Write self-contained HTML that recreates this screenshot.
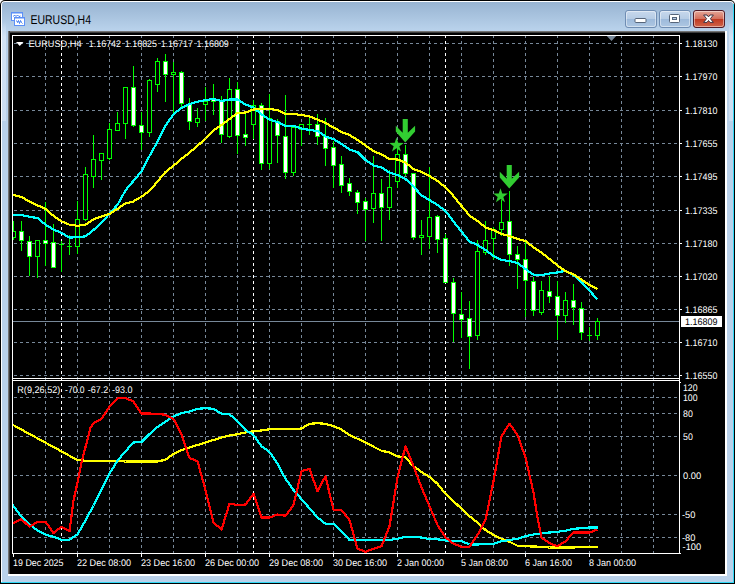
<!DOCTYPE html>
<html><head><meta charset="utf-8"><title>EURUSD,H4</title>
<style>html,body{margin:0;padding:0;background:#fff;overflow:hidden}svg{display:block}text{font-family:"Liberation Sans","DejaVu Sans",sans-serif}</style>
</head><body>
<svg width="737" height="584" viewBox="0 0 737 584" text-rendering="geometricPrecision">
<defs>
<linearGradient id="tb" x1="0" y1="0" x2="0" y2="1"><stop offset="0" stop-color="#98b4d2"/><stop offset="1" stop-color="#bad3ec"/></linearGradient>
<linearGradient id="bt" x1="0" y1="0" x2="0" y2="1"><stop offset="0" stop-color="#c8d9ed"/><stop offset="0.48" stop-color="#b6cce5"/><stop offset="0.52" stop-color="#9dbadb"/><stop offset="1" stop-color="#afc8e3"/></linearGradient>
<linearGradient id="cl" x1="0" y1="0" x2="0" y2="1"><stop offset="0" stop-color="#e5aa9c"/><stop offset="0.48" stop-color="#d4705c"/><stop offset="0.52" stop-color="#c03a22"/><stop offset="1" stop-color="#d0674c"/></linearGradient>
<linearGradient id="eg" x1="0" y1="0" x2="0" y2="1"><stop offset="0" stop-color="#8f8f8f"/><stop offset="1" stop-color="#202020"/></linearGradient>
<linearGradient id="egl" x1="0" y1="0" x2="1" y2="0"><stop offset="0" stop-color="#8f8f8f"/><stop offset="1" stop-color="#202020"/></linearGradient>
<clipPath id="cm"><rect x="13" y="36" width="666" height="342"/></clipPath>
<clipPath id="ci"><rect x="13" y="381" width="666" height="172"/></clipPath>
</defs>
<rect x="0" y="0" width="735" height="584" rx="5" ry="5" fill="#000"/>
<rect x="0" y="300" width="735" height="284" fill="#000"/>
<rect x="1" y="1" width="733" height="582" rx="4" ry="4" fill="#fff"/>
<rect x="1" y="300" width="733" height="282" fill="#31d8f6"/>
<rect x="2" y="2" width="731" height="580" rx="3" ry="3" fill="#b9d1ea"/>
<rect x="1" y="40" width="1" height="542" fill="#fff"/>
<rect x="2" y="300" width="731" height="282" fill="#b9d1ea"/>
<rect x="733" y="4" width="1" height="579" fill="#31d8f6"/>
<rect x="1" y="582" width="733" height="1" fill="#31d8f6"/>
<path d="M2 31 V5 Q2 2 5 2 H730 Q733 2 733 5 V31 Z" fill="url(#tb)"/>
<linearGradient id="sh" x1="0" y1="0" x2="0" y2="1"><stop offset="0" stop-color="#d3e3f4" stop-opacity="0"/><stop offset="0.15" stop-color="#d3e3f4" stop-opacity="1"/><stop offset="1" stop-color="#cbddf1" stop-opacity="1"/></linearGradient>
<rect x="2" y="22" width="4" height="99" fill="url(#sh)"/>
<rect x="729" y="22" width="4" height="99" fill="url(#sh)"/>
<rect x="8" y="31" width="719" height="545" fill="#fff"/>
<rect x="8" y="31" width="717" height="2" fill="url(#eg)"/>
<rect x="8" y="31" width="2" height="543" fill="url(#egl)"/>
<rect x="10" y="33" width="715" height="541" fill="#000"/>
<g shape-rendering="crispEdges">
<rect x="11.5" y="12.5" width="11" height="8" fill="#fff" stroke="#5c90f6"/>
<rect x="12" y="13" width="10" height="1" fill="#a9c6fb"/>
<rect x="14.5" y="17.5" width="10" height="8" fill="#fff" stroke="#5c90f6"/>
<rect x="15" y="18" width="9" height="1" fill="#a9c6fb"/>
</g>
<polyline points="16.5,20.5 17.5,22.5 18.5,20.5 19.5,23.5 20.5,20.5 21.5,22.5 22.5,23.5" fill="none" stroke="#3a78f0" stroke-width="1"/>
<polyline points="13.5,16.5 14.5,15 16,16.5 17.5,15 19,16.5 20.5,16" fill="none" stroke="#3a78f0" stroke-width="1"/>
<text x="30.5" y="23.8" font-size="12.6" fill="#000" textLength="60.5" lengthAdjust="spacingAndGlyphs">EURUSD,H4</text>
<rect x="625.5" y="10.5" width="31" height="17" rx="2.5" ry="2.5" fill="url(#bt)" stroke="#6f8db3"/>
<rect x="626.5" y="11.5" width="29" height="15" rx="2" ry="2" fill="none" stroke="#fff" stroke-opacity="0.45"/>
<rect x="659.5" y="10.5" width="31" height="17" rx="2.5" ry="2.5" fill="url(#bt)" stroke="#6f8db3"/>
<rect x="660.5" y="11.5" width="29" height="15" rx="2" ry="2" fill="none" stroke="#fff" stroke-opacity="0.45"/>
<rect x="693.5" y="10.5" width="31" height="17" rx="2.5" ry="2.5" fill="url(#cl)" stroke="#4f1c28"/>
<rect x="694.5" y="11.5" width="29" height="15" rx="2" ry="2" fill="none" stroke="#fff" stroke-opacity="0.45"/>
<rect x="635" y="18.5" width="11" height="4" rx="1" fill="#fff" stroke="#56657a" stroke-width="1"/>
<rect x="669.5" y="14.5" width="10" height="8" rx="1" fill="#fff" stroke="#56657a" stroke-width="1"/>
<rect x="672.5" y="17.5" width="4" height="2" fill="#b7cde6" stroke="#56657a" stroke-width="1"/>
<path d="M703.6 15 L707 15 L708.5 16.9 L710 15 L713.4 15 L710.4 18.7 L713.4 22.4 L710 22.4 L708.5 20.5 L707 22.4 L703.6 22.4 L706.6 18.7 Z" fill="#fff" stroke="#3f3545" stroke-width="1" stroke-linejoin="round"/>
<g shape-rendering="crispEdges" fill="none" stroke-width="1">
<line x1="14" y1="43.5" x2="680" y2="43.5" stroke="#778899" stroke-dasharray="3 3"/>
<line x1="14" y1="76.5" x2="680" y2="76.5" stroke="#778899" stroke-dasharray="3 3"/>
<line x1="14" y1="110.5" x2="680" y2="110.5" stroke="#778899" stroke-dasharray="3 3"/>
<line x1="14" y1="143.5" x2="680" y2="143.5" stroke="#778899" stroke-dasharray="3 3"/>
<line x1="14" y1="176.5" x2="680" y2="176.5" stroke="#778899" stroke-dasharray="3 3"/>
<line x1="14" y1="210.5" x2="680" y2="210.5" stroke="#778899" stroke-dasharray="3 3"/>
<line x1="14" y1="243.5" x2="680" y2="243.5" stroke="#778899" stroke-dasharray="3 3"/>
<line x1="14" y1="276.5" x2="680" y2="276.5" stroke="#778899" stroke-dasharray="3 3"/>
<line x1="14" y1="309.5" x2="680" y2="309.5" stroke="#778899" stroke-dasharray="3 3"/>
<line x1="14" y1="342.5" x2="680" y2="342.5" stroke="#778899" stroke-dasharray="3 3"/>
<line x1="14" y1="375.5" x2="680" y2="375.5" stroke="#778899" stroke-dasharray="3 3"/>
<line x1="14" y1="397.5" x2="680" y2="397.5" stroke="#778899" stroke-dasharray="3 3"/>
<line x1="14" y1="413.5" x2="680" y2="413.5" stroke="#778899" stroke-dasharray="3 3"/>
<line x1="14" y1="436.5" x2="680" y2="436.5" stroke="#778899" stroke-dasharray="3 3"/>
<line x1="14" y1="475.5" x2="680" y2="475.5" stroke="#778899" stroke-dasharray="3 3"/>
<line x1="14" y1="514.5" x2="680" y2="514.5" stroke="#778899" stroke-dasharray="3 3"/>
<line x1="14" y1="537.5" x2="680" y2="537.5" stroke="#778899" stroke-dasharray="3 3"/>
<line x1="45.5" y1="35" x2="45.5" y2="553" stroke="#778899" stroke-dasharray="3 3"/>
<line x1="77.5" y1="35" x2="77.5" y2="553" stroke="#778899" stroke-dasharray="3 3"/>
<line x1="109.5" y1="35" x2="109.5" y2="553" stroke="#778899" stroke-dasharray="3 3"/>
<line x1="141.5" y1="35" x2="141.5" y2="553" stroke="#778899" stroke-dasharray="3 3"/>
<line x1="173.5" y1="35" x2="173.5" y2="553" stroke="#778899" stroke-dasharray="3 3"/>
<line x1="205.5" y1="35" x2="205.5" y2="553" stroke="#778899" stroke-dasharray="3 3"/>
<line x1="237.5" y1="35" x2="237.5" y2="553" stroke="#778899" stroke-dasharray="3 3"/>
<line x1="269.5" y1="35" x2="269.5" y2="553" stroke="#778899" stroke-dasharray="3 3"/>
<line x1="301.5" y1="35" x2="301.5" y2="553" stroke="#778899" stroke-dasharray="3 3"/>
<line x1="333.5" y1="35" x2="333.5" y2="553" stroke="#778899" stroke-dasharray="3 3"/>
<line x1="365.5" y1="35" x2="365.5" y2="553" stroke="#778899" stroke-dasharray="3 3"/>
<line x1="397.5" y1="35" x2="397.5" y2="553" stroke="#778899" stroke-dasharray="3 3"/>
<line x1="429.5" y1="35" x2="429.5" y2="553" stroke="#778899" stroke-dasharray="3 3"/>
<line x1="461.5" y1="35" x2="461.5" y2="553" stroke="#778899" stroke-dasharray="3 3"/>
<line x1="493.5" y1="35" x2="493.5" y2="553" stroke="#778899" stroke-dasharray="3 3"/>
<line x1="525.5" y1="35" x2="525.5" y2="553" stroke="#778899" stroke-dasharray="3 3"/>
<line x1="557.5" y1="35" x2="557.5" y2="553" stroke="#778899" stroke-dasharray="3 3"/>
<line x1="589.5" y1="35" x2="589.5" y2="553" stroke="#778899" stroke-dasharray="3 3"/>
<line x1="621.5" y1="35" x2="621.5" y2="553" stroke="#778899" stroke-dasharray="3 3"/>
<line x1="653.5" y1="35" x2="653.5" y2="553" stroke="#778899" stroke-dasharray="3 3"/>
<line x1="61.5" y1="35" x2="61.5" y2="553" stroke="#fff" stroke-dasharray="3 3"/>
<line x1="253.5" y1="35" x2="253.5" y2="553" stroke="#fff" stroke-dasharray="3 3"/>
<line x1="445.5" y1="35" x2="445.5" y2="553" stroke="#fff" stroke-dasharray="3 3"/>
</g>
<rect x="13" y="321" width="667" height="1" fill="#778899"/>
<g shape-rendering="crispEdges" clip-path="url(#cm)">
<rect x="13" y="221" width="1" height="19" fill="#00ff00"/>
<rect x="11" y="231" width="5" height="7" fill="#00ff00"/>
<rect x="12" y="232" width="3" height="5" fill="#000"/>
<rect x="21" y="221" width="1" height="30" fill="#00ff00"/>
<rect x="19" y="231" width="5" height="10" fill="#00ff00"/>
<rect x="20" y="232" width="3" height="8" fill="#fff"/>
<rect x="29" y="236" width="1" height="40" fill="#00ff00"/>
<rect x="27" y="241" width="5" height="16" fill="#00ff00"/>
<rect x="28" y="242" width="3" height="14" fill="#fff"/>
<rect x="37" y="240" width="1" height="38" fill="#00ff00"/>
<rect x="35" y="240" width="5" height="17" fill="#00ff00"/>
<rect x="36" y="241" width="3" height="15" fill="#000"/>
<rect x="45" y="202" width="1" height="64" fill="#00ff00"/>
<rect x="43" y="240" width="5" height="4" fill="#00ff00"/>
<rect x="44" y="241" width="3" height="2" fill="#fff"/>
<rect x="53" y="224" width="1" height="44" fill="#00ff00"/>
<rect x="51" y="242" width="5" height="26" fill="#00ff00"/>
<rect x="52" y="243" width="3" height="24" fill="#fff"/>
<rect x="61" y="241" width="1" height="31" fill="#00ff00"/>
<rect x="59" y="244" width="5" height="1" fill="#00ff00"/>
<rect x="69" y="235" width="1" height="20" fill="#00ff00"/>
<rect x="67" y="246" width="5" height="1" fill="#00ff00"/>
<rect x="77" y="201" width="1" height="53" fill="#00ff00"/>
<rect x="75" y="219" width="5" height="28" fill="#00ff00"/>
<rect x="76" y="220" width="3" height="26" fill="#000"/>
<rect x="85" y="167" width="1" height="54" fill="#00ff00"/>
<rect x="83" y="174" width="5" height="46" fill="#00ff00"/>
<rect x="84" y="175" width="3" height="44" fill="#000"/>
<rect x="93" y="135" width="1" height="53" fill="#00ff00"/>
<rect x="91" y="159" width="5" height="18" fill="#00ff00"/>
<rect x="92" y="160" width="3" height="16" fill="#000"/>
<rect x="101" y="153" width="1" height="27" fill="#00ff00"/>
<rect x="99" y="153" width="5" height="8" fill="#00ff00"/>
<rect x="100" y="154" width="3" height="6" fill="#000"/>
<rect x="109" y="123" width="1" height="37" fill="#00ff00"/>
<rect x="107" y="129" width="5" height="30" fill="#00ff00"/>
<rect x="108" y="130" width="3" height="28" fill="#000"/>
<rect x="117" y="112" width="1" height="19" fill="#00ff00"/>
<rect x="115" y="123" width="5" height="8" fill="#00ff00"/>
<rect x="116" y="124" width="3" height="6" fill="#000"/>
<rect x="125" y="87" width="1" height="52" fill="#00ff00"/>
<rect x="123" y="87" width="5" height="37" fill="#00ff00"/>
<rect x="124" y="88" width="3" height="35" fill="#000"/>
<rect x="133" y="66" width="1" height="61" fill="#00ff00"/>
<rect x="131" y="87" width="5" height="39" fill="#00ff00"/>
<rect x="132" y="88" width="3" height="37" fill="#fff"/>
<rect x="141" y="112" width="1" height="38" fill="#00ff00"/>
<rect x="139" y="125" width="5" height="8" fill="#00ff00"/>
<rect x="140" y="126" width="3" height="6" fill="#fff"/>
<rect x="149" y="79" width="1" height="58" fill="#00ff00"/>
<rect x="147" y="80" width="5" height="53" fill="#00ff00"/>
<rect x="148" y="81" width="3" height="51" fill="#000"/>
<rect x="157" y="58" width="1" height="34" fill="#00ff00"/>
<rect x="155" y="61" width="5" height="24" fill="#00ff00"/>
<rect x="156" y="62" width="3" height="22" fill="#000"/>
<rect x="165" y="54" width="1" height="48" fill="#00ff00"/>
<rect x="163" y="61" width="5" height="14" fill="#00ff00"/>
<rect x="164" y="62" width="3" height="12" fill="#fff"/>
<rect x="173" y="62" width="1" height="51" fill="#00ff00"/>
<rect x="171" y="72" width="5" height="3" fill="#00ff00"/>
<rect x="172" y="73" width="3" height="1" fill="#000"/>
<rect x="181" y="71" width="1" height="37" fill="#00ff00"/>
<rect x="179" y="72" width="5" height="32" fill="#00ff00"/>
<rect x="180" y="73" width="3" height="30" fill="#fff"/>
<rect x="189" y="98" width="1" height="32" fill="#00ff00"/>
<rect x="187" y="104" width="5" height="18" fill="#00ff00"/>
<rect x="188" y="105" width="3" height="16" fill="#fff"/>
<rect x="197" y="108" width="1" height="19" fill="#00ff00"/>
<rect x="195" y="118" width="5" height="5" fill="#00ff00"/>
<rect x="196" y="119" width="3" height="3" fill="#000"/>
<rect x="205" y="87" width="1" height="34" fill="#00ff00"/>
<rect x="203" y="101" width="5" height="4" fill="#00ff00"/>
<rect x="204" y="102" width="3" height="2" fill="#000"/>
<rect x="213" y="84" width="1" height="31" fill="#00ff00"/>
<rect x="211" y="99" width="5" height="3" fill="#00ff00"/>
<rect x="212" y="100" width="3" height="1" fill="#fff"/>
<rect x="221" y="96" width="1" height="47" fill="#00ff00"/>
<rect x="219" y="101" width="5" height="34" fill="#00ff00"/>
<rect x="220" y="102" width="3" height="32" fill="#fff"/>
<rect x="229" y="78" width="1" height="60" fill="#00ff00"/>
<rect x="227" y="89" width="5" height="48" fill="#00ff00"/>
<rect x="228" y="90" width="3" height="46" fill="#000"/>
<rect x="237" y="82" width="1" height="72" fill="#00ff00"/>
<rect x="235" y="89" width="5" height="47" fill="#00ff00"/>
<rect x="236" y="90" width="3" height="45" fill="#fff"/>
<rect x="245" y="112" width="1" height="34" fill="#00ff00"/>
<rect x="243" y="134" width="5" height="4" fill="#00ff00"/>
<rect x="244" y="135" width="3" height="2" fill="#fff"/>
<rect x="253" y="100" width="1" height="39" fill="#00ff00"/>
<rect x="251" y="105" width="5" height="20" fill="#00ff00"/>
<rect x="252" y="106" width="3" height="18" fill="#000"/>
<rect x="261" y="103" width="1" height="67" fill="#00ff00"/>
<rect x="259" y="105" width="5" height="59" fill="#00ff00"/>
<rect x="260" y="106" width="3" height="57" fill="#fff"/>
<rect x="269" y="94" width="1" height="75" fill="#00ff00"/>
<rect x="267" y="118" width="5" height="46" fill="#00ff00"/>
<rect x="268" y="119" width="3" height="44" fill="#000"/>
<rect x="277" y="119" width="1" height="44" fill="#00ff00"/>
<rect x="275" y="121" width="5" height="15" fill="#00ff00"/>
<rect x="276" y="122" width="3" height="13" fill="#fff"/>
<rect x="285" y="95" width="1" height="84" fill="#00ff00"/>
<rect x="283" y="136" width="5" height="37" fill="#00ff00"/>
<rect x="284" y="137" width="3" height="35" fill="#fff"/>
<rect x="293" y="127" width="1" height="49" fill="#00ff00"/>
<rect x="291" y="127" width="5" height="46" fill="#00ff00"/>
<rect x="292" y="128" width="3" height="44" fill="#000"/>
<rect x="301" y="124" width="1" height="22" fill="#00ff00"/>
<rect x="299" y="124" width="5" height="6" fill="#00ff00"/>
<rect x="300" y="125" width="3" height="4" fill="#000"/>
<rect x="309" y="117" width="1" height="18" fill="#00ff00"/>
<rect x="307" y="124" width="5" height="1" fill="#00ff00"/>
<rect x="317" y="114" width="1" height="31" fill="#00ff00"/>
<rect x="315" y="124" width="5" height="13" fill="#00ff00"/>
<rect x="316" y="125" width="3" height="11" fill="#fff"/>
<rect x="325" y="118" width="1" height="48" fill="#00ff00"/>
<rect x="323" y="136" width="5" height="13" fill="#00ff00"/>
<rect x="324" y="137" width="3" height="11" fill="#fff"/>
<rect x="333" y="141" width="1" height="47" fill="#00ff00"/>
<rect x="331" y="147" width="5" height="19" fill="#00ff00"/>
<rect x="332" y="148" width="3" height="17" fill="#fff"/>
<rect x="341" y="156" width="1" height="37" fill="#00ff00"/>
<rect x="339" y="164" width="5" height="22" fill="#00ff00"/>
<rect x="340" y="165" width="3" height="20" fill="#fff"/>
<rect x="349" y="178" width="1" height="18" fill="#00ff00"/>
<rect x="347" y="183" width="5" height="9" fill="#00ff00"/>
<rect x="348" y="184" width="3" height="7" fill="#fff"/>
<rect x="357" y="190" width="1" height="24" fill="#00ff00"/>
<rect x="355" y="192" width="5" height="11" fill="#00ff00"/>
<rect x="356" y="193" width="3" height="9" fill="#fff"/>
<rect x="365" y="198" width="1" height="43" fill="#00ff00"/>
<rect x="363" y="201" width="5" height="9" fill="#00ff00"/>
<rect x="364" y="202" width="3" height="7" fill="#fff"/>
<rect x="373" y="156" width="1" height="67" fill="#00ff00"/>
<rect x="371" y="193" width="5" height="16" fill="#00ff00"/>
<rect x="372" y="194" width="3" height="14" fill="#000"/>
<rect x="381" y="179" width="1" height="62" fill="#00ff00"/>
<rect x="379" y="193" width="5" height="15" fill="#00ff00"/>
<rect x="380" y="194" width="3" height="13" fill="#fff"/>
<rect x="389" y="170" width="1" height="50" fill="#00ff00"/>
<rect x="387" y="187" width="5" height="21" fill="#00ff00"/>
<rect x="388" y="188" width="3" height="19" fill="#000"/>
<rect x="397" y="147" width="1" height="41" fill="#00ff00"/>
<rect x="395" y="154" width="5" height="28" fill="#00ff00"/>
<rect x="396" y="155" width="3" height="26" fill="#000"/>
<rect x="405" y="145" width="1" height="31" fill="#00ff00"/>
<rect x="403" y="154" width="5" height="20" fill="#00ff00"/>
<rect x="404" y="155" width="3" height="18" fill="#fff"/>
<rect x="413" y="173" width="1" height="67" fill="#00ff00"/>
<rect x="411" y="173" width="5" height="65" fill="#00ff00"/>
<rect x="412" y="174" width="3" height="63" fill="#fff"/>
<rect x="421" y="220" width="1" height="35" fill="#00ff00"/>
<rect x="419" y="235" width="5" height="3" fill="#00ff00"/>
<rect x="420" y="236" width="3" height="1" fill="#000"/>
<rect x="429" y="167" width="1" height="82" fill="#00ff00"/>
<rect x="427" y="217" width="5" height="20" fill="#00ff00"/>
<rect x="428" y="218" width="3" height="18" fill="#000"/>
<rect x="437" y="215" width="1" height="38" fill="#00ff00"/>
<rect x="435" y="216" width="5" height="24" fill="#00ff00"/>
<rect x="436" y="217" width="3" height="22" fill="#fff"/>
<rect x="445" y="234" width="1" height="49" fill="#00ff00"/>
<rect x="443" y="238" width="5" height="45" fill="#00ff00"/>
<rect x="444" y="239" width="3" height="43" fill="#fff"/>
<rect x="453" y="278" width="1" height="64" fill="#00ff00"/>
<rect x="451" y="282" width="5" height="32" fill="#00ff00"/>
<rect x="452" y="283" width="3" height="30" fill="#fff"/>
<rect x="461" y="292" width="1" height="46" fill="#00ff00"/>
<rect x="459" y="314" width="5" height="6" fill="#00ff00"/>
<rect x="460" y="315" width="3" height="4" fill="#fff"/>
<rect x="469" y="301" width="1" height="68" fill="#00ff00"/>
<rect x="467" y="318" width="5" height="19" fill="#00ff00"/>
<rect x="468" y="319" width="3" height="17" fill="#fff"/>
<rect x="477" y="240" width="1" height="100" fill="#00ff00"/>
<rect x="475" y="251" width="5" height="85" fill="#00ff00"/>
<rect x="476" y="252" width="3" height="83" fill="#000"/>
<rect x="485" y="221" width="1" height="34" fill="#00ff00"/>
<rect x="483" y="240" width="5" height="13" fill="#00ff00"/>
<rect x="484" y="241" width="3" height="11" fill="#000"/>
<rect x="493" y="227" width="1" height="33" fill="#00ff00"/>
<rect x="491" y="229" width="5" height="10" fill="#00ff00"/>
<rect x="492" y="230" width="3" height="8" fill="#000"/>
<rect x="501" y="200" width="1" height="36" fill="#00ff00"/>
<rect x="499" y="222" width="5" height="8" fill="#00ff00"/>
<rect x="500" y="223" width="3" height="6" fill="#000"/>
<rect x="509" y="191" width="1" height="75" fill="#00ff00"/>
<rect x="507" y="221" width="5" height="34" fill="#00ff00"/>
<rect x="508" y="222" width="3" height="32" fill="#fff"/>
<rect x="517" y="246" width="1" height="43" fill="#00ff00"/>
<rect x="515" y="254" width="5" height="6" fill="#00ff00"/>
<rect x="516" y="255" width="3" height="4" fill="#fff"/>
<rect x="525" y="241" width="1" height="76" fill="#00ff00"/>
<rect x="523" y="259" width="5" height="22" fill="#00ff00"/>
<rect x="524" y="260" width="3" height="20" fill="#fff"/>
<rect x="533" y="277" width="1" height="39" fill="#00ff00"/>
<rect x="531" y="281" width="5" height="30" fill="#00ff00"/>
<rect x="532" y="282" width="3" height="28" fill="#fff"/>
<rect x="541" y="281" width="1" height="34" fill="#00ff00"/>
<rect x="539" y="290" width="5" height="23" fill="#00ff00"/>
<rect x="540" y="291" width="3" height="21" fill="#000"/>
<rect x="549" y="276" width="1" height="27" fill="#00ff00"/>
<rect x="547" y="291" width="5" height="6" fill="#00ff00"/>
<rect x="548" y="292" width="3" height="4" fill="#fff"/>
<rect x="557" y="281" width="1" height="59" fill="#00ff00"/>
<rect x="555" y="296" width="5" height="20" fill="#00ff00"/>
<rect x="556" y="297" width="3" height="18" fill="#fff"/>
<rect x="565" y="292" width="1" height="31" fill="#00ff00"/>
<rect x="563" y="300" width="5" height="16" fill="#00ff00"/>
<rect x="564" y="301" width="3" height="14" fill="#000"/>
<rect x="573" y="284" width="1" height="41" fill="#00ff00"/>
<rect x="571" y="300" width="5" height="8" fill="#00ff00"/>
<rect x="572" y="301" width="3" height="6" fill="#fff"/>
<rect x="581" y="302" width="1" height="38" fill="#00ff00"/>
<rect x="579" y="308" width="5" height="25" fill="#00ff00"/>
<rect x="580" y="309" width="3" height="23" fill="#fff"/>
<rect x="589" y="327" width="1" height="14" fill="#00ff00"/>
<rect x="587" y="335" width="5" height="1" fill="#00ff00"/>
<rect x="597" y="318" width="1" height="22" fill="#00ff00"/>
<rect x="595" y="321" width="5" height="15" fill="#00ff00"/>
<rect x="596" y="322" width="3" height="13" fill="#000"/>
</g>
<g clip-path="url(#cm)" fill="none" stroke-width="2.2" stroke-linejoin="round" stroke-linecap="butt" shape-rendering="crispEdges">
<polyline stroke="#00ffff" points="5.50,214.50 13.50,215.00 21.50,215.00 29.50,216.80 37.50,218.00 45.50,224.70 53.50,229.50 61.50,233.00 69.50,237.70 77.50,237.00 85.50,236.40 93.50,230.00 101.50,222.70 109.50,213.70 117.50,204.80 125.50,190.40 133.50,180.80 141.50,171.50 149.50,156.00 157.50,141.60 165.50,125.80 173.50,114.20 181.50,108.00 189.50,104.00 197.50,101.80 205.50,100.00 213.50,99.00 221.50,101.00 229.50,99.50 237.50,99.50 245.50,104.50 253.50,107.50 261.50,114.50 269.50,119.50 277.50,122.00 285.50,126.00 293.50,126.00 301.50,128.50 309.50,130.00 317.50,131.00 325.50,136.50 333.50,139.00 341.50,144.00 349.50,149.50 357.50,152.00 365.50,160.00 373.50,165.50 381.50,167.50 389.50,172.50 397.50,175.00 405.50,179.00 413.50,186.50 421.50,195.50 429.50,200.00 437.50,205.00 445.50,211.00 453.50,221.50 461.50,231.50 469.50,241.50 477.50,245.00 485.50,250.00 493.50,256.00 501.50,260.00 509.50,261.00 517.50,263.00 525.50,269.00 533.50,274.80 541.50,275.10 549.50,273.50 557.50,272.40 565.50,270.80 573.50,275.10 581.50,281.90 589.50,290.70 597.50,299.50"/>
<polyline stroke="#ffff00" points="5.50,192.00 13.50,195.00 21.50,197.00 29.50,201.70 37.50,205.30 45.50,209.00 53.50,215.80 61.50,221.30 69.50,224.70 77.50,225.80 85.50,224.70 93.50,219.20 101.50,216.50 109.50,213.90 117.50,208.90 125.50,203.40 133.50,201.40 141.50,196.60 149.50,191.00 157.50,181.50 165.50,172.00 173.50,165.70 181.50,158.80 189.50,152.60 197.50,145.80 205.50,138.50 213.50,130.50 221.50,125.00 229.50,119.00 237.50,113.00 245.50,112.50 253.50,109.50 261.50,109.00 269.50,109.00 277.50,110.00 285.50,114.00 293.50,114.00 301.50,115.00 309.50,116.50 317.50,119.50 325.50,123.00 333.50,127.50 341.50,132.00 349.50,135.00 357.50,140.00 365.50,145.50 373.50,151.00 381.50,154.50 389.50,159.00 397.50,159.50 405.50,162.50 413.50,169.00 421.50,172.00 429.50,176.00 437.50,181.00 445.50,187.50 453.50,196.00 461.50,206.00 469.50,215.50 477.50,221.00 485.50,227.50 493.50,230.00 501.50,234.00 509.50,236.00 517.50,239.00 525.50,241.00 533.50,247.50 541.50,252.50 549.50,259.00 557.50,265.50 565.50,271.00 573.50,274.50 581.50,279.50 589.50,285.00 597.50,289.00"/>
</g>
<polygon fill="#32cd32" points="402.70,119.00 407.80,119.00 407.80,132.70 415.10,125.80 415.10,131.50 405.25,142.50 395.80,131.50 395.80,125.80 402.70,132.70"/>
<polygon fill="#32cd32" points="506.70,165.00 511.80,165.00 511.80,178.70 519.10,171.80 519.10,177.50 509.25,188.50 499.80,177.50 499.80,171.80 506.70,178.70"/>
<polygon fill="#32cd32" points="396.50,137.60 398.26,142.87 403.82,142.92 399.35,146.23 401.03,151.53 396.50,148.30 391.97,151.53 393.65,146.23 389.18,142.92 394.74,142.87"/>
<polygon fill="#32cd32" points="500.50,188.30 502.26,193.57 507.82,193.62 503.35,196.93 505.03,202.23 500.50,199.00 495.97,202.23 497.65,196.93 493.18,193.62 498.74,193.57"/>
<g clip-path="url(#ci)" fill="none" stroke-width="2.2" stroke-linejoin="round" stroke-linecap="butt" shape-rendering="crispEdges">
<polyline stroke="#ffff00" points="5.50,421.50 13.50,425.25 21.50,429.60 29.50,434.00 37.50,438.30 45.50,442.70 53.50,447.00 61.50,451.40 69.50,455.80 77.50,460.00 85.50,460.75 93.50,461.00 101.50,461.00 109.50,461.00 117.50,461.00 125.50,461.50 133.50,461.50 141.50,461.50 149.50,461.50 157.50,461.50 165.50,459.75 173.50,454.00 181.50,450.25 189.50,447.50 197.50,445.00 205.50,442.50 213.50,440.00 221.50,437.50 229.50,435.50 237.50,434.25 245.50,432.50 253.50,431.25 261.50,430.50 269.50,429.25 277.50,429.00 285.50,429.00 293.50,429.00 301.50,428.50 309.50,423.75 317.50,423.25 325.50,423.75 333.50,426.25 341.50,429.50 349.50,435.00 357.50,438.75 365.50,442.50 373.50,446.75 381.50,450.75 389.50,452.50 397.50,456.25 405.50,457.50 413.50,466.25 421.50,472.00 429.50,477.00 437.50,483.75 445.50,493.75 453.50,501.25 461.50,508.75 469.50,516.25 477.50,522.50 485.50,530.00 493.50,535.00 501.50,538.75 509.50,541.75 517.50,545.75 525.50,546.25 533.50,546.50 541.50,546.75 549.50,547.50 557.50,547.50 565.50,547.50 573.50,547.50 581.50,547.00 589.50,547.00 597.50,547.00"/>
<polyline stroke="#00ffff" points="5.50,495.00 13.50,506.00 21.50,516.75 29.50,524.25 37.50,530.50 45.50,534.75 53.50,536.75 61.50,539.75 69.50,539.75 77.50,534.25 85.50,520.50 93.50,505.50 101.50,489.50 109.50,473.50 117.50,460.75 125.50,451.25 133.50,442.50 141.50,442.00 149.50,434.00 157.50,427.00 165.50,421.50 173.50,416.50 181.50,413.25 189.50,411.50 197.50,408.75 205.50,408.25 213.50,408.75 221.50,413.75 229.50,414.25 237.50,421.25 245.50,430.00 253.50,435.00 261.50,446.25 269.50,452.00 277.50,463.75 285.50,478.75 293.50,490.00 301.50,499.25 309.50,508.25 317.50,517.50 325.50,523.75 333.50,523.75 341.50,531.25 349.50,540.00 357.50,540.00 365.50,540.00 373.50,540.00 381.50,540.00 389.50,540.00 397.50,538.75 405.50,536.75 413.50,536.75 421.50,537.50 429.50,539.25 437.50,539.25 445.50,540.50 453.50,541.25 461.50,541.25 469.50,544.50 477.50,544.50 485.50,543.75 493.50,543.75 501.50,541.25 509.50,540.00 517.50,538.75 525.50,536.25 533.50,534.50 541.50,533.25 549.50,532.50 557.50,531.75 565.50,530.75 573.50,528.75 581.50,528.25 589.50,527.50 597.50,527.50"/>
<polyline stroke="#ff0000" points="5.50,526.00 13.50,523.00 21.50,519.25 29.50,526.75 37.50,521.75 45.50,521.75 53.50,533.00 61.50,526.75 69.50,531.25 73.50,500.50 77.50,482.50 81.50,462.50 85.50,447.00 90.50,427.75 93.50,423.25 101.50,419.00 109.50,406.50 117.50,398.25 125.50,398.25 133.50,401.50 141.50,413.50 149.50,413.50 157.50,414.00 165.50,414.75 173.50,419.00 181.50,434.00 189.50,458.00 197.50,461.25 205.50,490.00 213.50,522.50 221.50,529.50 229.50,503.75 237.50,505.00 245.50,504.50 253.50,493.75 261.50,517.50 269.50,517.50 277.50,514.50 285.50,515.75 293.50,505.00 301.50,471.25 309.50,468.75 317.50,491.25 325.50,476.25 333.50,510.00 341.50,510.00 349.50,520.00 357.50,548.75 365.50,551.75 373.50,548.75 381.50,546.25 389.50,526.25 397.50,477.50 405.50,446.25 413.50,466.25 421.50,487.50 429.50,506.25 437.50,525.00 445.50,537.50 453.50,543.75 461.50,546.75 469.50,546.75 477.50,535.00 485.50,520.00 493.50,481.25 501.50,436.25 509.50,423.75 517.50,435.00 525.50,457.50 533.50,492.50 537.50,517.50 541.50,537.50 549.50,543.25 557.50,546.25 565.50,541.25 573.50,532.50 581.50,532.50 589.50,532.50 597.50,529.50"/>
</g>
<g shape-rendering="crispEdges" fill="#fff">
<rect x="12" y="35" width="668" height="1"/>
<rect x="12" y="35" width="1" height="519"/>
<rect x="679" y="35" width="1" height="519"/>
<rect x="12" y="378" width="668" height="1"/>
<rect x="12" y="380" width="668" height="1"/>
<rect x="12" y="553" width="668" height="1"/>
<rect x="680" y="43" width="2" height="1"/>
<rect x="680" y="76" width="2" height="1"/>
<rect x="680" y="110" width="2" height="1"/>
<rect x="680" y="143" width="2" height="1"/>
<rect x="680" y="176" width="2" height="1"/>
<rect x="680" y="210" width="2" height="1"/>
<rect x="680" y="243" width="2" height="1"/>
<rect x="680" y="276" width="2" height="1"/>
<rect x="680" y="309" width="2" height="1"/>
<rect x="680" y="342" width="2" height="1"/>
<rect x="680" y="375" width="2" height="1"/>
<rect x="680" y="382" width="1" height="1"/>
<rect x="680" y="553" width="1" height="1"/>
<rect x="13" y="554" width="1" height="3"/>
<rect x="77" y="554" width="1" height="3"/>
<rect x="141" y="554" width="1" height="3"/>
<rect x="205" y="554" width="1" height="3"/>
<rect x="269" y="554" width="1" height="3"/>
<rect x="333" y="554" width="1" height="3"/>
<rect x="397" y="554" width="1" height="3"/>
<rect x="461" y="554" width="1" height="3"/>
<rect x="525" y="554" width="1" height="3"/>
<rect x="589" y="554" width="1" height="3"/>
</g>
<polygon points="606.8,36 616.2,36 611.5,41" fill="#778899"/>
<text x="685.1" y="47.0" font-size="9.6" fill="#fff" text-anchor="start" textLength="32.4" lengthAdjust="spacingAndGlyphs">1.18130</text>
<text x="685.1" y="80.0" font-size="9.6" fill="#fff" text-anchor="start" textLength="32.4" lengthAdjust="spacingAndGlyphs">1.17970</text>
<text x="685.1" y="114.0" font-size="9.6" fill="#fff" text-anchor="start" textLength="32.4" lengthAdjust="spacingAndGlyphs">1.17810</text>
<text x="685.1" y="147.0" font-size="9.6" fill="#fff" text-anchor="start" textLength="32.4" lengthAdjust="spacingAndGlyphs">1.17655</text>
<text x="685.1" y="180.0" font-size="9.6" fill="#fff" text-anchor="start" textLength="32.4" lengthAdjust="spacingAndGlyphs">1.17495</text>
<text x="685.1" y="214.0" font-size="9.6" fill="#fff" text-anchor="start" textLength="32.4" lengthAdjust="spacingAndGlyphs">1.17335</text>
<text x="685.1" y="247.0" font-size="9.6" fill="#fff" text-anchor="start" textLength="32.4" lengthAdjust="spacingAndGlyphs">1.17180</text>
<text x="685.1" y="280.0" font-size="9.6" fill="#fff" text-anchor="start" textLength="32.4" lengthAdjust="spacingAndGlyphs">1.17020</text>
<text x="685.1" y="313.0" font-size="9.6" fill="#fff" text-anchor="start" textLength="32.4" lengthAdjust="spacingAndGlyphs">1.16865</text>
<text x="685.1" y="346.0" font-size="9.6" fill="#fff" text-anchor="start" textLength="32.4" lengthAdjust="spacingAndGlyphs">1.16710</text>
<text x="685.1" y="379.0" font-size="9.6" fill="#fff" text-anchor="start" textLength="32.4" lengthAdjust="spacingAndGlyphs">1.16550</text>
<rect x="681" y="316" width="41" height="11" fill="#fff"/>
<text x="685.1" y="325.0" font-size="9.6" fill="#000" text-anchor="start" textLength="32.4" lengthAdjust="spacingAndGlyphs">1.16809</text>
<text x="683.0" y="391.0" font-size="9.6" fill="#fff" text-anchor="start" textLength="14.6" lengthAdjust="spacingAndGlyphs">120</text>
<text x="683.0" y="401.0" font-size="9.6" fill="#fff" text-anchor="start" textLength="14.6" lengthAdjust="spacingAndGlyphs">100</text>
<text x="683.0" y="417.0" font-size="9.6" fill="#fff" text-anchor="start" textLength="9.8" lengthAdjust="spacingAndGlyphs">80</text>
<text x="683.0" y="440.0" font-size="9.6" fill="#fff" text-anchor="start" textLength="9.8" lengthAdjust="spacingAndGlyphs">50</text>
<text x="683.0" y="479.0" font-size="9.6" fill="#fff" text-anchor="start" textLength="18.2" lengthAdjust="spacingAndGlyphs">0.00</text>
<text x="682.0" y="518.0" font-size="9.6" fill="#fff" text-anchor="start" textLength="13.4" lengthAdjust="spacingAndGlyphs">-50</text>
<text x="682.0" y="541.0" font-size="9.6" fill="#fff" text-anchor="start" textLength="13.4" lengthAdjust="spacingAndGlyphs">-80</text>
<text x="682.6" y="550.0" font-size="9.6" fill="#fff" text-anchor="start" textLength="18.6" lengthAdjust="spacingAndGlyphs">-100</text>
<polygon points="16,42 23.5,42 19.75,46" fill="#fff"/>
<text x="28.5" y="47.0" font-size="9.6" fill="#fff" text-anchor="start" textLength="53.0" lengthAdjust="spacingAndGlyphs">EURUSD,H4</text>
<text x="88.8" y="47.0" font-size="9.6" fill="#fff" text-anchor="start" textLength="32.2" lengthAdjust="spacingAndGlyphs">1.16742</text>
<text x="124.8" y="47.0" font-size="9.6" fill="#fff" text-anchor="start" textLength="32.2" lengthAdjust="spacingAndGlyphs">1.16825</text>
<text x="160.7" y="47.0" font-size="9.6" fill="#fff" text-anchor="start" textLength="32.2" lengthAdjust="spacingAndGlyphs">1.16717</text>
<text x="196.6" y="47.0" font-size="9.6" fill="#fff" text-anchor="start" textLength="32.2" lengthAdjust="spacingAndGlyphs">1.16809</text>
<text x="17.3" y="392.9" font-size="9.6" fill="#fff" text-anchor="start" textLength="43.0" lengthAdjust="spacingAndGlyphs">R(9,26,52)</text>
<text x="65.1" y="392.9" font-size="9.6" fill="#fff" text-anchor="start" textLength="19.5" lengthAdjust="spacingAndGlyphs">-70.0</text>
<text x="87.8" y="392.9" font-size="9.6" fill="#fff" text-anchor="start" textLength="20.6" lengthAdjust="spacingAndGlyphs">-67.2</text>
<text x="112.0" y="392.9" font-size="9.6" fill="#fff" text-anchor="start" textLength="20.5" lengthAdjust="spacingAndGlyphs">-93.0</text>
<text x="13.0" y="566.0" font-size="9.6" fill="#fff" text-anchor="start" textLength="50.5" lengthAdjust="spacingAndGlyphs">19 Dec 2025</text>
<text x="77.0" y="566.0" font-size="9.6" fill="#fff" text-anchor="start" textLength="54.0" lengthAdjust="spacingAndGlyphs">22 Dec 08:00</text>
<text x="141.0" y="566.0" font-size="9.6" fill="#fff" text-anchor="start" textLength="54.0" lengthAdjust="spacingAndGlyphs">23 Dec 16:00</text>
<text x="205.0" y="566.0" font-size="9.6" fill="#fff" text-anchor="start" textLength="54.0" lengthAdjust="spacingAndGlyphs">26 Dec 00:00</text>
<text x="269.0" y="566.0" font-size="9.6" fill="#fff" text-anchor="start" textLength="54.0" lengthAdjust="spacingAndGlyphs">29 Dec 08:00</text>
<text x="333.0" y="566.0" font-size="9.6" fill="#fff" text-anchor="start" textLength="54.0" lengthAdjust="spacingAndGlyphs">30 Dec 16:00</text>
<text x="397.0" y="566.0" font-size="9.6" fill="#fff" text-anchor="start" textLength="47.0" lengthAdjust="spacingAndGlyphs">2 Jan 00:00</text>
<text x="461.0" y="566.0" font-size="9.6" fill="#fff" text-anchor="start" textLength="47.0" lengthAdjust="spacingAndGlyphs">5 Jan 08:00</text>
<text x="525.0" y="566.0" font-size="9.6" fill="#fff" text-anchor="start" textLength="47.0" lengthAdjust="spacingAndGlyphs">6 Jan 16:00</text>
<text x="589.0" y="566.0" font-size="9.6" fill="#fff" text-anchor="start" textLength="47.0" lengthAdjust="spacingAndGlyphs">8 Jan 00:00</text>
</svg>
</body></html>
